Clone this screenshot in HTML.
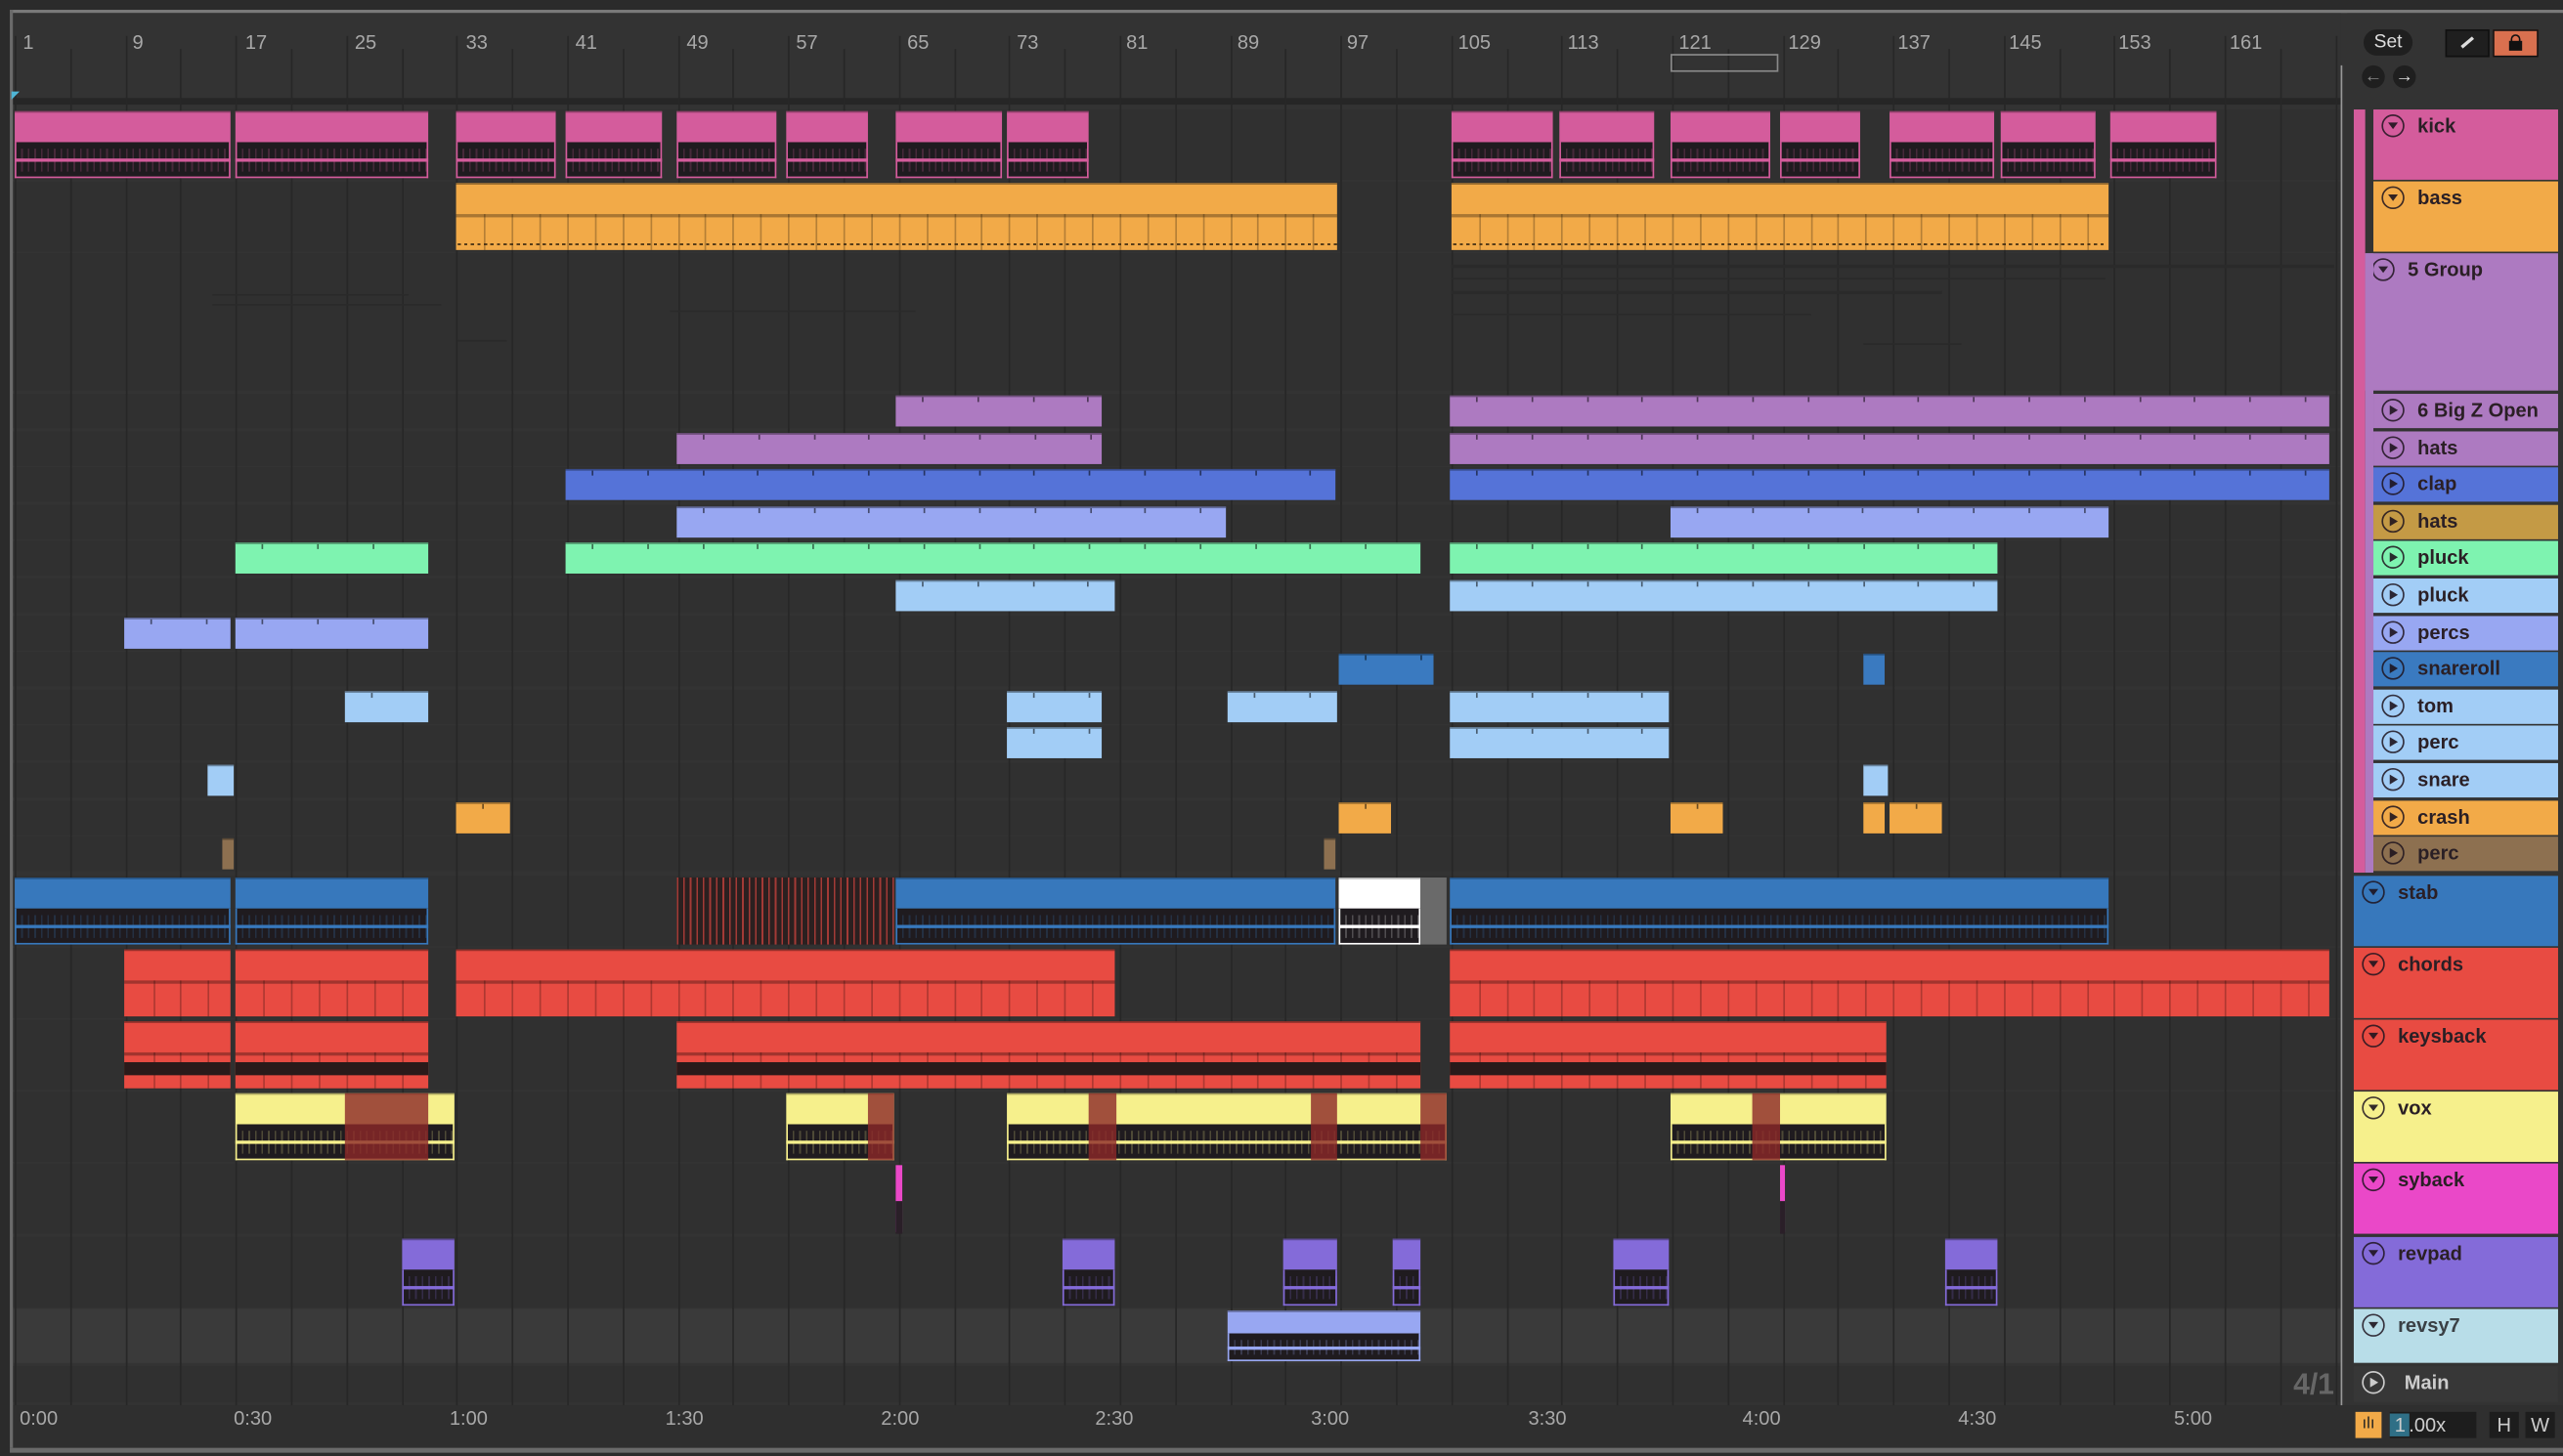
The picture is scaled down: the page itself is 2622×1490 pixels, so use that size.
<!DOCTYPE html>
<html><head><meta charset="utf-8">
<style>
html,body{margin:0;padding:0;background:#2a2a2a;overflow:hidden;width:2622px;height:1490px}
#w{position:absolute;left:0;top:0;width:1568px;height:891px;transform:scale(1.67219,1.67228);transform-origin:0 0;background:#2b2b2b;font-family:"Liberation Sans",sans-serif}
.a{position:absolute}
.rl{position:absolute;top:19px;color:#a8a8a8;font-family:"Liberation Sans Narrow","Liberation Sans",sans-serif;font-size:12px}
.tl{position:absolute;top:861px;color:#a8a8a8;font-family:"Liberation Sans Narrow","Liberation Sans",sans-serif;font-size:12px}
.h{position:absolute;font-weight:bold;font-size:12px;color:#2a1f25}
.h .ic{position:absolute;left:5px;top:3px;width:12px;height:12px;border:1.3px solid rgba(30,20,30,.85);border-radius:50%}
.h .ic:after{content:"";position:absolute;left:3px;top:4px;border-left:3.2px solid transparent;border-right:3.2px solid transparent;border-top:4.5px solid rgba(30,20,30,.9)}
.h .ic.p:after{left:4px;top:3px;border-top:3.2px solid transparent;border-bottom:3.2px solid transparent;border-left:5px solid rgba(30,20,30,.9);border-right:0}
.h .ic.m:after{border-left-color:#ccc}
.h span{position:absolute;left:27px;top:3px}
</style></head><body>
<div id="w">
 <div class="a" style="left:6px;top:6px;width:1562px;height:2px;background:#7a7a7a"></div>
 <div class="a" style="left:6px;top:6px;width:2px;height:880px;background:#6a6a6a"></div>
 <div class="a" style="left:8px;top:8px;width:1560px;height:852px;background:#333"></div>
 <div id="arr" class="a" style="left:8px;top:8px;width:1424px;height:852px"></div>
 <div class="rl" style="left:14px">1</div><div class="rl" style="left:81px">9</div><div class="rl" style="left:150px">17</div><div class="rl" style="left:217px">25</div><div class="rl" style="left:285px">33</div><div class="rl" style="left:352px">41</div><div class="rl" style="left:420px">49</div><div class="rl" style="left:487px">57</div><div class="rl" style="left:555px">65</div><div class="rl" style="left:622px">73</div><div class="rl" style="left:689px">81</div><div class="rl" style="left:757px">89</div><div class="rl" style="left:824px">97</div><div class="rl" style="left:892px">105</div><div class="rl" style="left:959px">113</div><div class="rl" style="left:1027px">121</div><div class="rl" style="left:1094px">129</div><div class="rl" style="left:1161px">137</div><div class="rl" style="left:1229px">145</div><div class="rl" style="left:1296px">153</div><div class="rl" style="left:1364px">161</div>
 <div class="a" style="left:1022px;top:33px;width:66px;height:11px;border:1px solid #8a8a8a;box-sizing:border-box"></div>
 <div class="a" style="left:7px;top:56px;border-left:5px solid #4fb6d6;border-bottom:5px solid transparent"></div>
 <div class="a" style="left:1436px;top:8px;width:132px;height:852px;background:#333"></div>
 <div class="a" style="left:1432px;top:40px;width:1px;height:820px;background:#999"></div>
 <div class="a" style="left:1446px;top:18px;width:30px;height:16px;border-radius:9px;background:#1f1f1f;color:#ddd;font-size:11.5px;text-align:center;line-height:16px">Set</div>
 <div class="a" style="left:1496px;top:18px;width:25px;height:15px;background:#1f1f1f;border:1px solid #111"><div class="a" style="left:8px;top:6px;width:9px;height:2px;background:#ddd;transform:rotate(-40deg)"></div></div>
 <div class="a" style="left:1525px;top:18px;width:26px;height:15px;background:#d9704f;border:1px solid #111"><div class="a" style="left:9px;top:6px;width:8px;height:6px;background:#111"></div><div class="a" style="left:10px;top:2px;width:4px;height:5px;border:1.3px solid #111;border-bottom:0;border-radius:3px 3px 0 0"></div></div>
 <div class="a" style="left:1445px;top:40px;width:14px;height:14px;border-radius:50%;background:#1f1f1f;color:#888;font-size:11px;text-align:center;line-height:14px">←</div>
 <div class="a" style="left:1464px;top:40px;width:14px;height:14px;border-radius:50%;background:#1f1f1f;color:#ddd;font-size:11px;text-align:center;line-height:14px">→</div>
 <div class="h" style="left:1452px;top:67px;width:113px;height:43px;background:#d45c9c"><div class="ic"></div><span>kick</span></div>
 <div class="h" style="left:1452px;top:111px;width:113px;height:43px;background:#f2aa48"><div class="ic"></div><span>bass</span></div>
 <div class="h" style="left:1447px;top:155px;width:118px;height:84px;background:#ad7ac1"><div class="ic" style="left:4px"></div><span style="left:26px">5 Group</span></div>
 <div class="h" style="left:1452px;top:241px;width:113px;height:21px;background:#ad7ac1"><div class="ic p"></div><span>6 Big Z Open</span></div>
 <div class="h" style="left:1452px;top:264px;width:113px;height:21px;background:#ad7ac1"><div class="ic p"></div><span>hats</span></div>
 <div class="h" style="left:1452px;top:286px;width:113px;height:21px;background:#5573d8"><div class="ic p"></div><span>clap</span></div>
 <div class="h" style="left:1452px;top:309px;width:113px;height:21px;background:#c49a45"><div class="ic p"></div><span>hats</span></div>
 <div class="h" style="left:1452px;top:331px;width:113px;height:21px;background:#7ef3b0"><div class="ic p"></div><span>pluck</span></div>
 <div class="h" style="left:1452px;top:354px;width:113px;height:21px;background:#a2cdf6"><div class="ic p"></div><span>pluck</span></div>
 <div class="h" style="left:1452px;top:377px;width:113px;height:21px;background:#98a7f2"><div class="ic p"></div><span>percs</span></div>
 <div class="h" style="left:1452px;top:399px;width:113px;height:21px;background:#3a7ac0"><div class="ic p"></div><span>snareroll</span></div>
 <div class="h" style="left:1452px;top:422px;width:113px;height:21px;background:#a2cdf6"><div class="ic p"></div><span>tom</span></div>
 <div class="h" style="left:1452px;top:444px;width:113px;height:21px;background:#a2cdf6"><div class="ic p"></div><span>perc</span></div>
 <div class="h" style="left:1452px;top:467px;width:113px;height:21px;background:#a2cdf6"><div class="ic p"></div><span>snare</span></div>
 <div class="h" style="left:1452px;top:490px;width:113px;height:21px;background:#f2aa48"><div class="ic p"></div><span>crash</span></div>
 <div class="h" style="left:1452px;top:512px;width:113px;height:21px;background:#8d7050"><div class="ic p"></div><span>perc</span></div>
 <div class="a" style="left:1440px;top:67px;width:7px;height:467px;background:#d45c9c"></div>
 <div class="a" style="left:1447px;top:155px;width:5px;height:379px;background:#ad7ac1"></div>
 <div class="h" style="left:1440px;top:536px;width:125px;height:43px;background:#3778bc"><div class="ic"></div><span>stab</span></div>
 <div class="h" style="left:1440px;top:580px;width:125px;height:43px;background:#e84b42"><div class="ic"></div><span>chords</span></div>
 <div class="h" style="left:1440px;top:624px;width:125px;height:43px;background:#e84b42"><div class="ic"></div><span>keysback</span></div>
 <div class="h" style="left:1440px;top:668px;width:125px;height:43px;background:#f6f08c"><div class="ic"></div><span>vox</span></div>
 <div class="h" style="left:1440px;top:712px;width:125px;height:43px;background:#ea48c8"><div class="ic"></div><span>syback</span></div>
 <div class="h" style="left:1440px;top:757px;width:125px;height:43px;background:#846bd9"><div class="ic"></div><span>revpad</span></div>
 <div class="h" style="left:1440px;top:801px;width:125px;height:33px;background:#b8dde8;color:#3a4045"><div class="ic"></div><span>revsy7</span></div>
 <div class="h" style="left:1440px;top:836px;width:125px;height:22px;background:#373737;color:#ccc"><div class="ic p m" style="border-color:#ccc"></div><span style="left:31px">Main</span></div>
 <div class="a" style="left:1403px;top:837px;color:#666;font-size:18px;font-weight:bold">4/1</div>
 <div class="a" style="left:8px;top:860px;width:1560px;height:27px;background:#2f2f2f"></div>
 <div class="a" style="left:6px;top:886px;width:1562px;height:3px;background:#6a6a6a"></div>
 <div class="tl" style="left:12px">0:00</div><div class="tl" style="left:143px">0:30</div><div class="tl" style="left:275px">1:00</div><div class="tl" style="left:407px">1:30</div><div class="tl" style="left:539px">2:00</div><div class="tl" style="left:670px">2:30</div><div class="tl" style="left:802px">3:00</div><div class="tl" style="left:935px">3:30</div><div class="tl" style="left:1066px">4:00</div><div class="tl" style="left:1198px">4:30</div><div class="tl" style="left:1330px">5:00</div>
 <div class="a" style="left:1441px;top:864px;width:16px;height:16px;background:#f2aa48;color:#222;font-size:10px;text-align:center;line-height:16px">ılı</div>
 <div class="a" style="left:1462px;top:864px;width:53px;height:16px;background:#1d1d1d;color:#ccc;font-size:12px;line-height:16px"><span style="background:#2f6f86;padding:0 2px 0 3px">1</span>.00x</div>
 <div class="a" style="left:1523px;top:864px;width:18px;height:16px;background:#1d1d1d;color:#ccc;font-size:12px;text-align:center;line-height:16px">H</div>
 <div class="a" style="left:1545px;top:864px;width:18px;height:16px;background:#1d1d1d;color:#ccc;font-size:12px;text-align:center;line-height:16px">W</div>
</div>
<script>
var A=document.getElementById('arr');
function d(x,y,w,h,s){var e=document.createElement('div');e.className='a';e.style.cssText='left:'+(x-8)+'px;top:'+(y-8)+'px;width:'+w+'px;height:'+h+'px;'+(s||'');A.appendChild(e);return e;}
var rows=[[67,43],[111,43],[155,84],[241,21],[264,21],[286,21],[309,21],[331,21],[354,21],[377,21],[399,21],[422,21],[444,21],[467,21],[490,21],[512,21],[536,43],[580,43],[624,43],[668,43],[712,43],[757,43],[801,33],[836,22]];
d(8,8,1424,52,'background:#333');
d(8,60,1424,4,'background:#262626');
rows.forEach(function(r,i){d(8,r[0],1424,r[1],'background:'+(i==22?'#3a3a3a':'#303030'));});
for(var b=1;b<=169;b+=4){var x=Math.round(9+(b-1)*8.45);d(x,(b-1)%8==0?22:30,1,(b-1)%8==0?838:830,'background:#272727');}
[[130,180,120,1],[130,186,140,1],[280,208,30,1],[410,190,150,1],[888,162,540,2],[888,170,400,1],[888,178,300,2],[888,192,220,1],[1140,210,60,1]].forEach(function(l){d(l[0],l[1],l[2],l[3],'background:#2a2a2a');});
function clip(ri,x1,x2,col,type){var r=rows[ri],y=r[0]+1,h=r[1]-2,w=x2-x1;
 if(type=='a'){var top=Math.round(h*0.46);
  d(x1,y,w,top,'background:'+col+';box-shadow:inset 0 1px 0 rgba(0,0,0,.3)');
  d(x1,y+top,w,h-top,'background:#1f1b1f;border-left:1px solid '+col+';border-right:1px solid '+col+';box-sizing:border-box');
  d(x1,y+top+Math.round((h-top)/2)-1,w,1.5,'background:'+col);
  d(x1,y+h-1,w,1,'background:'+col);
  d(x1,y+top+4,w,h-top-8,'opacity:.22;background:repeating-linear-gradient(90deg,'+col+' 0 1px,transparent 1px 4px)');
 } else if(type=='m'){
  d(x1,y,w,h,'background:'+col+';box-shadow:inset 0 1px 0 rgba(0,0,0,.35)');
  d(x1,y+Math.round(h*0.46),w,1.5,'background:rgba(0,0,0,.3)');
  for(var gx=Math.ceil((x1-9)/16.9)*16.9+9;gx<x2-2;gx+=16.9){if(gx>x1+2)d(Math.round(gx),y+Math.round(h*0.46),1,h-Math.round(h*0.46),'background:rgba(0,0,0,.25)');}
 } else {
  d(x1,y,w,h,'background:'+col+';box-shadow:inset 0 1px 0 rgba(0,0,0,.35)');
  for(var gx=x1+16;gx<x2-2;gx+=33.8)d(Math.round(gx),y+1,1,3,'background:rgba(0,0,0,.55)');
 }
}
var K='#d45c9c';
[[9,141],[144,262],[279,340],[346,405],[414,475],[481,531],[548,613],[616,666],[888,950],[954,1012],[1022,1083],[1089,1138],[1156,1220],[1224,1282],[1291,1356]].forEach(function(c){clip(0,c[0],c[1],K,'a');});
clip(1,279,818,'#f2aa48','m');clip(1,888,1290,'#f2aa48','m');
d(280,149,538,1,'background:repeating-linear-gradient(90deg,#3a2810 0 2px,transparent 2px 4px)');
d(889,149,400,1,'background:repeating-linear-gradient(90deg,#3a2810 0 2px,transparent 2px 4px)');
var P='#ad7ac1';
clip(3,548,674,P,'s');clip(3,887,1425,P,'s');
clip(4,414,674,P,'s');clip(4,887,1425,P,'s');
clip(5,346,817,'#5573d8','s');clip(5,887,1425,'#5573d8','s');
clip(6,414,750,'#98a7f2','s');clip(6,1022,1290,'#98a7f2','s');
clip(7,144,262,'#7ef3b0','s');clip(7,346,869,'#7ef3b0','s');clip(7,887,1222,'#7ef3b0','s');
clip(8,548,682,'#a2cdf6','s');clip(8,887,1222,'#a2cdf6','s');
clip(9,76,141,'#98a7f2','s');clip(9,144,262,'#98a7f2','s');
clip(10,819,877,'#3a7ac0','s');clip(10,1140,1153,'#3a7ac0','s');
[[211,262],[616,674],[751,818],[887,1021]].forEach(function(c){clip(11,c[0],c[1],'#a2cdf6','s');});
clip(12,616,674,'#a2cdf6','s');clip(12,887,1021,'#a2cdf6','s');
clip(13,127,143,'#a2cdf6','s');clip(13,1140,1155,'#a2cdf6','s');
[[279,312],[819,851],[1022,1054],[1140,1153],[1156,1188]].forEach(function(c){clip(14,c[0],c[1],'#f2aa48','s');});
clip(15,136,143,'#8d7050','s');clip(15,810,817,'#8d7050','s');
var S='#3778bc';
clip(16,9,141,S,'a');clip(16,144,262,S,'a');clip(16,548,817,S,'a');clip(16,887,1290,S,'a');clip(16,819,869,'#ffffff','a');
d(869,537,16,41,'background:#6a6a6a');
d(414,537,133,41,'background:repeating-linear-gradient(90deg,#a33a36 0 1px,#2b2020 1px 4px)');
var R='#e84b42';
clip(17,76,141,R,'m');clip(17,144,262,R,'m');clip(17,279,682,R,'m');clip(17,887,1425,R,'m');
[[76,141],[144,262],[414,869],[887,1154]].forEach(function(c){clip(18,c[0],c[1],R,'m');d(c[0],650,c[1]-c[0],8,'background:#2a1a1a');});
var Y='#f6f08c';
[[144,278],[481,547],[616,885],[1022,1154]].forEach(function(c){clip(19,c[0],c[1],Y,'a');});
[[211,262],[531,547],[666,683],[802,818],[869,885],[1072,1089]].forEach(function(c){d(c[0],669,c[1]-c[0],41,'background:rgba(140,40,40,.8)');});
d(548,713,4,41,'background:#ea48c8');d(1089,713,3,41,'background:#ea48c8');
d(548,735,4,20,'background:#2a1f28');d(1089,735,3,20,'background:#2a1f28');
[[246,278],[650,682],[785,818],[852,869],[987,1021],[1190,1222]].forEach(function(c){clip(21,c[0],c[1],'#846bd9','a');});
clip(22,751,869,'#98a7f2','a');
</script>
</body></html>
